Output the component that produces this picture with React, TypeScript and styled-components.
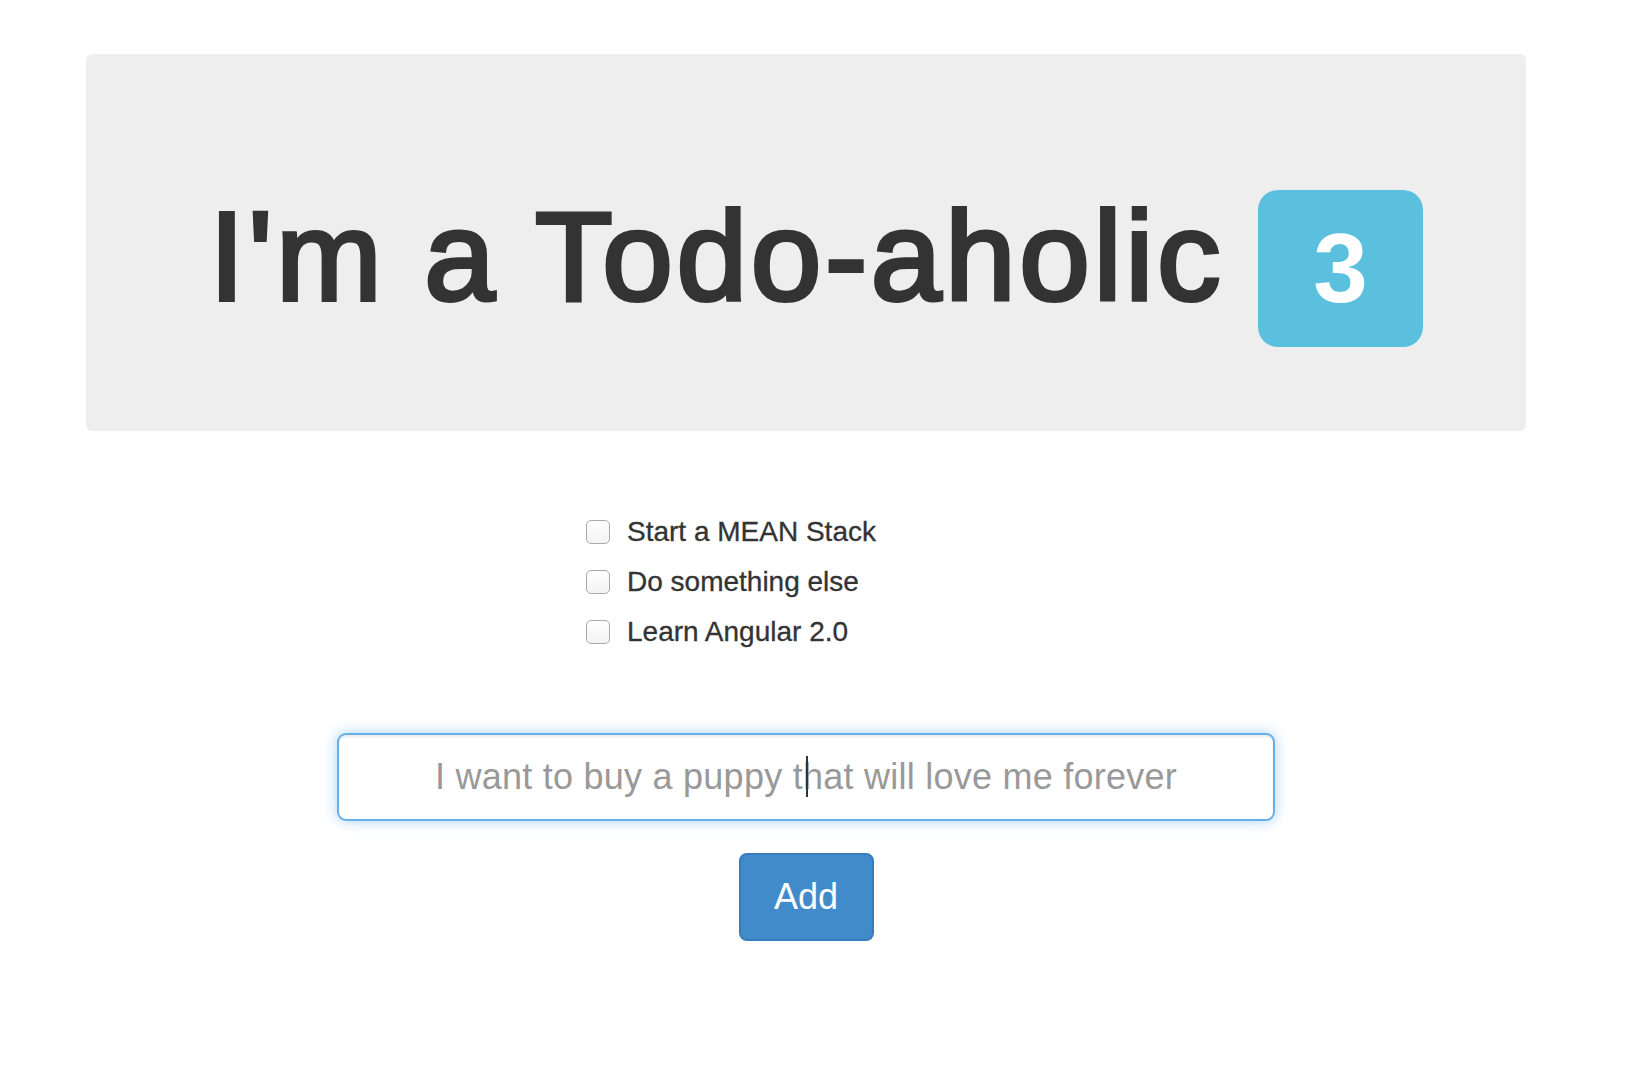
import styled, { createGlobalStyle } from 'styled-components';
import { useState } from 'react';

interface Todo {
  id: number
  text: string
  done: boolean
}

const initialTodos: Todo[] = [
  { id: 1, text: 'Start a MEAN Stack', done: false },
  { id: 2, text: 'Do something else', done: false },
  { id: 3, text: 'Learn Angular 2.0', done: false },
]

const GlobalStyle = createGlobalStyle`
  body {
    margin: 0;
    background: #fff;
    color: #333;
    font-family: "Liberation Sans", Arial, Helvetica, sans-serif;
  }
`

export default function App() {
  const [todos, setTodos] = useState<Todo[]>(initialTodos)
  const [newTodo, setNewTodo] = useState<string>('')

  const toggleHandler = (id: number) => {
    setTodos(prev => prev.map(t => (t.id === id ? { ...t, done: !t.done } : t)))
  }

  const addHandler = () => {
    if (newTodo.trim()) {
      setTodos(prev => prev.concat({ id: Date.now(), text: newTodo, done: false }))
      setNewTodo('')
    }
  }

  const remaining = todos.filter(t => !t.done).length

  return (
    <Page>
      <GlobalStyle />
      <Jumbotron>
        <Heading>
          <Title>I'm a Todo-aholic</Title>
          <Badge>{remaining}</Badge>
        </Heading>
      </Jumbotron>

      <TodoList>
        {todos.map(todo => (
          <TodoRow key={todo.id}>
            <Checkbox
              type="checkbox"
              checked={todo.done}
              onChange={() => toggleHandler(todo.id)}
            />
            <TodoText>{todo.text}</TodoText>
          </TodoRow>
        ))}
      </TodoList>

      <InputWrap>
        <Input
          type="text"
          placeholder="I want to buy a puppy that will love me forever"
          value={newTodo}
          onChange={e => setNewTodo(e.target.value)}
          onKeyDown={e => e.key === 'Enter' && addHandler()}
        />
        {!newTodo && <Caret />}
      </InputWrap>

      <Button onClick={addHandler}>Add</Button>
    </Page>
  )
}

const Page = styled.div`
  width: 1440px;
  margin-left: 86px;
  padding-top: 54px;
  display: flex;
  flex-direction: column;
  align-items: center;
`

const Jumbotron = styled.div`
  box-sizing: border-box;
  width: 100%;
  height: 377px;
  padding: 133px 0 0 20px;
  background: #eee;
  border-radius: 6px;
  display: flex;
  justify-content: center;
  align-items: flex-start;
`

const Heading = styled.h1`
  margin: 0;
  display: flex;
  align-items: flex-start;
  gap: 34px;
  font-weight: 500;
  color: #333;
`

// Helvetica Neue medium is not installed: thicken the regular face a little
const Title = styled.span`
  font-size: 127px;
  line-height: 1.1;
  letter-spacing: 3.6px;
  -webkit-text-stroke: 4px #333;
`

const Badge = styled.span`
  display: inline-block;
  margin-top: 3px;
  padding: 29px 55px 30px;
  font-size: 98px;
  line-height: 1;
  font-weight: bold;
  color: #fff;
  background: #5bc0de;
  border-radius: 20px;
`

const TodoList = styled.ul`
  list-style: none;
  margin: 76px 0 0;
  padding: 0;
  width: 440px;
`

const TodoRow = styled.li`
  display: flex;
  align-items: center;
  height: 50px;
  gap: 17px;
`

const Checkbox = styled.input`
  appearance: none;
  box-sizing: border-box;
  width: 24px;
  height: 24px;
  margin: 0;
  border: 1.5px solid #aaa;
  border-radius: 5px;
  background: linear-gradient(#fff, #f3f3f3);
  cursor: pointer;

  &:checked {
    background: #4a90d9;
    border-color: #3a7bc8;
  }
`

const TodoText = styled.span`
  font-size: 28px;
  color: #333;
  line-height: 1;
  -webkit-text-stroke: 0.3px #333;
`

const InputWrap = styled.div`
  position: relative;
  margin-top: 76px;
  width: 938px;
`

const Input = styled.input`
  display: block;
  box-sizing: border-box;
  width: 100%;
  height: 88px;
  padding: 0 24px;
  border: 2px solid #66afe9;
  border-radius: 9px;
  font-family: "Liberation Sans", Arial, sans-serif;
  font-size: 36px;
  letter-spacing: 0.25px;
  color: #555;
  text-align: center;
  outline: none;
  box-shadow: inset 0 2px 2px rgba(0, 0, 0, 0.075), 0 0 14px rgba(102, 175, 233, 0.55);

  &::placeholder {
    color: #999;
  }
`

const Caret = styled.span`
  position: absolute;
  left: 469px;
  top: 23px;
  width: 2px;
  height: 41px;
  background: #333;
  pointer-events: none;
`

const Button = styled.button`
  margin-top: 32px;
  box-sizing: border-box;
  width: 135px;
  height: 88px;
  border: 2px solid #357ebd;
  border-radius: 8px;
  background: #428bca;
  color: #fff;
  font-family: "Liberation Sans", Arial, sans-serif;
  font-size: 36px;
  cursor: pointer;
`
